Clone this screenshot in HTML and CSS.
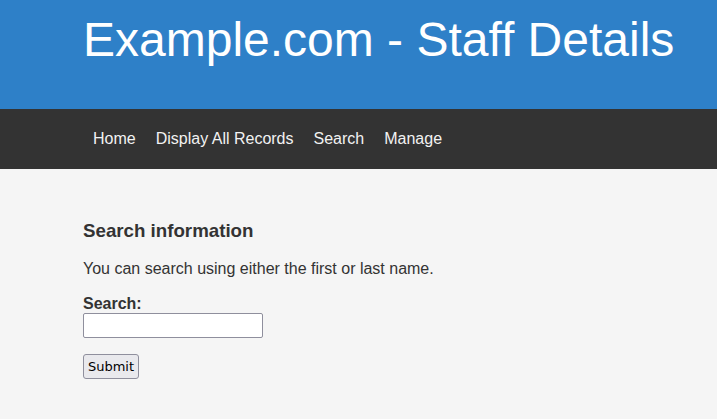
FILE: index.html
```html
<!DOCTYPE html>
<html lang="en">
<head>
<meta charset="utf-8">
<title>Example.com - Staff Details</title>
<link rel="stylesheet" href="styles.css">
</head>
<body>
<header class="site-header">
  <h1 class="site-title">Example.com - Staff Details</h1>
</header>
<nav class="site-nav">
  <ul class="nav-list">
    <li><a class="nav-link" href="#">Home</a></li>
    <li><a class="nav-link" href="#">Display All Records</a></li>
    <li><a class="nav-link" href="#">Search</a></li>
    <li><a class="nav-link" href="#">Manage</a></li>
  </ul>
</nav>
<main class="content">
  <h3 class="section-title">Search information</h3>
  <p class="intro">You can search using either the first or last name.</p>
  <form class="search-form">
    <label class="field-label" for="q">Search:</label>
    <input class="field-input" id="q" type="text">
    <button class="submit-btn" type="button">Submit</button>
  </form>
</main>
</body>
</html>
```
FILE: styles.css
```css
html, body {
  margin: 0;
  padding: 0;
}
body {
  font-family: "Liberation Sans", Arial, sans-serif;
  background: #f5f5f5;
  color: #333;
  min-height: 419px;
}
.site-header {
  background: #2e80c8;
  height: 109px;
  box-sizing: border-box;
  padding: 12px 0 0 83px;
  overflow: hidden;
}
.site-title {
  margin: 0;
  font-size: 48px;
  font-weight: normal;
  line-height: 55px;
  color: #fff;
  white-space: nowrap;
}
.site-nav {
  background: #333;
  height: 60px;
  display: flex;
  align-items: center;
  padding: 0 83px;
}
.nav-list {
  list-style: none;
  margin: 0;
  padding: 0;
  display: flex;
}
.nav-link {
  display: block;
  padding: 0 10px;
  color: #f2f2f2;
  text-decoration: none;
  font-size: 16px;
  line-height: 18px;
}
.content {
  padding: 32px 83px 0;
}
.section-title {
  margin: 18.72px 0;
  font-size: 18.72px;
  font-weight: bold;
}
.intro {
  margin: 16px 0 17px;
  font-size: 16px;
}
.search-form {
  display: flex;
  flex-direction: column;
  align-items: flex-start;
}
.field-label {
  font-weight: bold;
  font-size: 16px;
  line-height: 18px;
}
.field-input {
  box-sizing: border-box;
  width: 180px;
  height: 25px;
  margin: 0 0 16px;
  border: 1px solid #8f8f9d;
  border-radius: 2px;
  background: #fff;
}
.submit-btn {
  box-sizing: border-box;
  height: 25px;
  width: 56px;
  padding: 0;
  font-family: "DejaVu Sans", sans-serif;
  font-size: 13px;
  color: #000;
  background: #e9e9ed;
  border: 1px solid #8f8f9d;
  border-radius: 3px;
}
```
